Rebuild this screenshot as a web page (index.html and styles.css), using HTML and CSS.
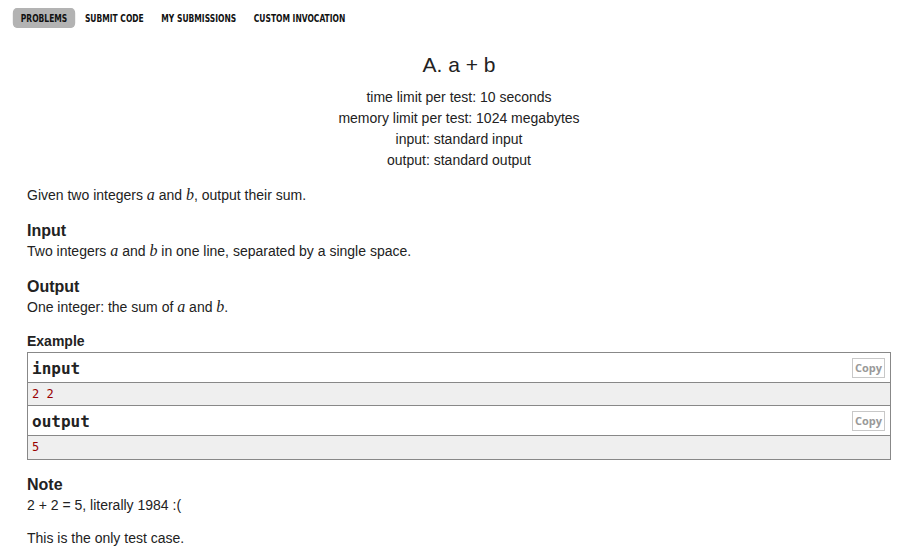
FILE: index.html
```html
<!DOCTYPE html>
<html>
<head>
<meta charset="utf-8">
<link rel="stylesheet" href="styles.css">
</head>
<body>
<nav class="nav">
  <a class="nav-item active">PROBLEMS</a>
  <a class="nav-item">SUBMIT CODE</a>
  <a class="nav-item">MY SUBMISSIONS</a>
  <a class="nav-item">CUSTOM INVOCATION</a>
</nav>
<main class="problem">
  <header class="header">
    <div class="title">A. a + b</div>
    <div class="limit">time limit per test: 10 seconds</div>
    <div class="limit">memory limit per test: 1024 megabytes</div>
    <div class="limit">input: standard input</div>
    <div class="limit">output: standard output</div>
  </header>
  <p class="para">Given two integers <span class="math">a</span> and <span class="math">b</span>, output their sum.</p>
  <section class="section">
    <div class="section-title">Input</div>
    <p class="para">Two integers <span class="math">a</span> and <span class="math">b</span> in one line, separated by a single space.</p>
  </section>
  <section class="section">
    <div class="section-title">Output</div>
    <p class="para before-example">One integer: the sum of <span class="math">a</span> and <span class="math">b</span>.</p>
  </section>
  <section class="section">
    <div class="example-title">Example</div>
    <div class="sample">
      <div class="sample-head"><span>input</span><span class="copy">Copy</span></div>
      <pre class="sample-data">2 2</pre>
      <div class="sample-head"><span>output</span><span class="copy">Copy</span></div>
      <pre class="sample-data last">5</pre>
    </div>
  </section>
  <section class="section note">
    <div class="section-title">Note</div>
    <p class="para short">2 + 2 = 5, literally 1984 :(</p>
    <p class="para">This is the only test case.</p>
  </section>
</main>
</body>
</html>
```
FILE: styles.css
```css
html, body {
  margin: 0;
  padding: 0;
  background: #fff;
}
body {
  font-family: "Liberation Sans", Arial, sans-serif;
  color: #222;
  font-size: 14px;
}
.nav {
  display: flex;
  align-items: center;
  padding: 8px 0 0 16px;
  transform: scaleX(0.8);
  transform-origin: 0 0;
}
.nav-item {
  font-family: "DejaVu Sans Condensed", "DejaVu Sans", sans-serif;
  font-stretch: condensed;
  font-weight: bold;
  font-size: 10.5px;
  color: #111;
  padding: 0 10px;
  height: 20px;
  line-height: 21px;
  border-radius: 5px;
  margin-right: 2px;
}
.nav-item.active {
  background: #b3b3b3;
}
.problem {
  display: flex;
  flex-direction: column;
  margin: 0 15px 0 27px;
}
.header {
  display: flex;
  flex-direction: column;
  align-items: center;
  padding-top: 22px;
  margin-bottom: 14px;
}
.title {
  font-size: 21px;
  line-height: 30px;
  margin-bottom: 7px;
  color: #222;
}
.limit {
  line-height: 21px;
  font-size: 14px;
}
.para {
  margin: 0 0 15px;
  line-height: 21px;
}
.para.before-example {
  margin-bottom: 14px;
}
.para.short {
  margin-bottom: 12px;
}
.math {
  font-family: "Liberation Serif", "DejaVu Serif", serif;
  font-style: italic;
  font-size: 16px;
  line-height: 1;
}
.section-title {
  font-weight: bold;
  font-size: 16px;
  line-height: 20px;
}
.example-title {
  font-weight: bold;
  font-size: 14px;
  line-height: 19px;
  margin-bottom: 1px;
}
.sample {
  border: 1px solid #888;
  border-bottom: none;
}
.sample-head {
  display: flex;
  justify-content: space-between;
  align-items: center;
  box-sizing: border-box;
  height: 30px;
  padding: 1px 5px 0 4px;
  border-bottom: 1px solid #888;
  font-family: "DejaVu Sans Mono", monospace;
  font-weight: bold;
  font-size: 16px;
}
.copy {
  font-family: "Open Sans", "DejaVu Sans", sans-serif;
  font-weight: bold;
  font-size: 11px;
  color: #999;
  border: 1px solid #c8c8c8;
  padding: 0 2px;
  line-height: 18px;
}
.sample-data {
  margin: 0;
  background: #efefef;
  border-bottom: 1px solid #888;
  font-family: "DejaVu Sans Mono", monospace;
  font-size: 12px;
  color: #900;
  line-height: 22px;
  padding: 0 4px;
}
.sample-data.last {
  line-height: 23px;
}
.note {
  margin-top: 15px;
}
```
